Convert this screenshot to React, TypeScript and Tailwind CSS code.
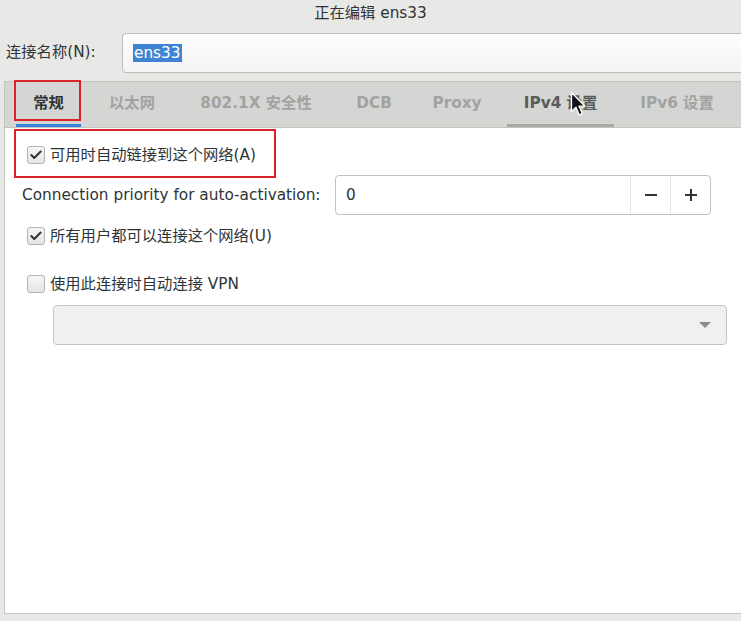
import { Check } from "lucide-react";

const tabs = [
  { label: "常规", w: "w-[65px]", active: true },
  { label: "以太网", w: "w-[102px]" },
  { label: "802.1X 安全性", w: "w-[146px]" },
  { label: "DCB", w: "w-[90px]" },
  { label: "Proxy", w: "w-[76px]" },
  { label: "IPv4 设置", w: "w-[107px] ml-[12px]", hover: true },
  { label: "IPv6 设置", w: "w-[126px]" },
];

function CheckBox({ checked }: { checked?: boolean }) {
  return (
    <span className="flex h-[18px] w-[18px] shrink-0 items-center justify-center rounded-[3px] border border-[#b3b3b0] bg-gradient-to-b from-[#f7f7f7] to-[#e4e4e2] shadow-[0_1px_0_rgba(255,255,255,0.8)]">
      {checked && <Check className="size-[14px] text-[#2e3436]" strokeWidth={3.5} />}
    </span>
  );
}

function CheckRow({ label, checked }: { label: string; checked?: boolean }) {
  return (
    <div className="flex h-[34px] items-center gap-[5px] pl-[5px]">
      <CheckBox checked={checked} />
      <span>{label}</span>
    </div>
  );
}

export default function App() {
  return (
    <div className="relative h-[621px] w-[741px] overflow-hidden bg-[#e8e8e7] font-['DejaVu_Sans','Noto_Sans_CJK_SC',sans-serif] text-[15.3px] text-[#2e3436]">
      <div className="flex h-[24px] items-center justify-center pt-[2px]">正在编辑 ens33</div>

      <div className="flex h-[57px] items-center pl-[6px]">
        <span className="w-[116px] shrink-0">连接名称(N):</span>
        <div className="-mr-[6px] flex h-[40px] flex-1 items-center rounded-l-[4px] border border-[#bcbcb9] bg-gradient-to-b from-[#fefefe] to-[#f3f3f3] pl-[10px]">
          <span className="bg-[#3f84d4] px-px leading-[18px] text-white">ens33</span>
        </div>
      </div>

      <div className="ml-[4px] flex h-[533px] flex-col border-b border-l border-t border-[#c4c4c1] bg-white">
        <div className="flex h-[46px] shrink-0 border-b border-[#c4c4c1] bg-[#d5d5d4] pl-[11px] font-bold">
          {tabs.map((t) => (
            <div
              key={t.label}
              className={`flex shrink-0 flex-col ${t.w}`}
            >
              <div
                className={`flex flex-1 items-center justify-center ${
                  t.active ? "text-[#2e3436]" : t.hover ? "text-[#5a5c5a]" : "text-[#a2a3a1]"
                }`}
              >
                {t.label}
              </div>
              <div
                className={`h-[3px] ${
                  t.active ? "bg-[#3584e4]" : t.hover ? "bg-[#a9a9a7]" : ""
                }`}
              />
            </div>
          ))}
        </div>

        <div className="flex flex-col pl-[17px] pt-[10px]">
          <CheckRow label="可用时自动链接到这个网络(A)" checked />

          <div className="mt-[3px] flex h-[40px] items-center">
            <span className="w-[313px] shrink-0">Connection priority for auto-activation:</span>
            <div className="flex h-[40px] w-[376px] overflow-hidden rounded-[4px] border border-[#c0c0bd] bg-white">
              <div className="flex flex-1 items-center pl-[10px]">0</div>
              <div className="flex w-[40px] items-center justify-center border-l border-[#e6e6e4]">
                <svg width="14" height="14" viewBox="0 0 14 14">
                  <path d="M1 7h12" stroke="#2e3436" strokeWidth="2" />
                </svg>
              </div>
              <div className="flex w-[40px] items-center justify-center border-l border-[#e6e6e4]">
                <svg width="14" height="14" viewBox="0 0 14 14">
                  <path d="M1 7h12M7 1v12" stroke="#2e3436" strokeWidth="2" />
                </svg>
              </div>
            </div>
          </div>

          <div className="mt-[4px]">
            <CheckRow label="所有用户都可以连接这个网络(U)" checked />
          </div>
          <div className="mt-[14px]">
            <CheckRow label="使用此连接时自动连接 VPN" />
          </div>

          <div className="ml-[31px] mt-[4px] flex h-[40px] w-[674px] items-center justify-end rounded-[4px] border border-[#c4c4c1] bg-[#f0f0ef] pr-[15px]">
            <svg width="12" height="6" viewBox="0 0 12 6">
              <path d="M0 0h12L6 6z" fill="#8b8b89" />
            </svg>
          </div>
        </div>
      </div>

      {/* annotation boxes */}
      <div className="absolute left-[14px] top-[80px] h-[41px] w-[67px] border-2 border-[#d8232a]" />
      <div className="absolute left-[14px] top-[129px] h-[49px] w-[262px] border-2 border-[#d8232a]" />

      {/* mouse pointer */}
      <svg className="absolute left-[570px] top-[91px]" width="16" height="26" viewBox="0 0 16 26">
        <path
          d="M1.5 1.5v19l4.5-4.2 3.3 7.6 3-1.3-3.3-7.4h6z"
          fill="#111"
          stroke="#fff"
          strokeWidth="1.3"
          strokeLinejoin="round"
        />
      </svg>
    </div>
  );
}
